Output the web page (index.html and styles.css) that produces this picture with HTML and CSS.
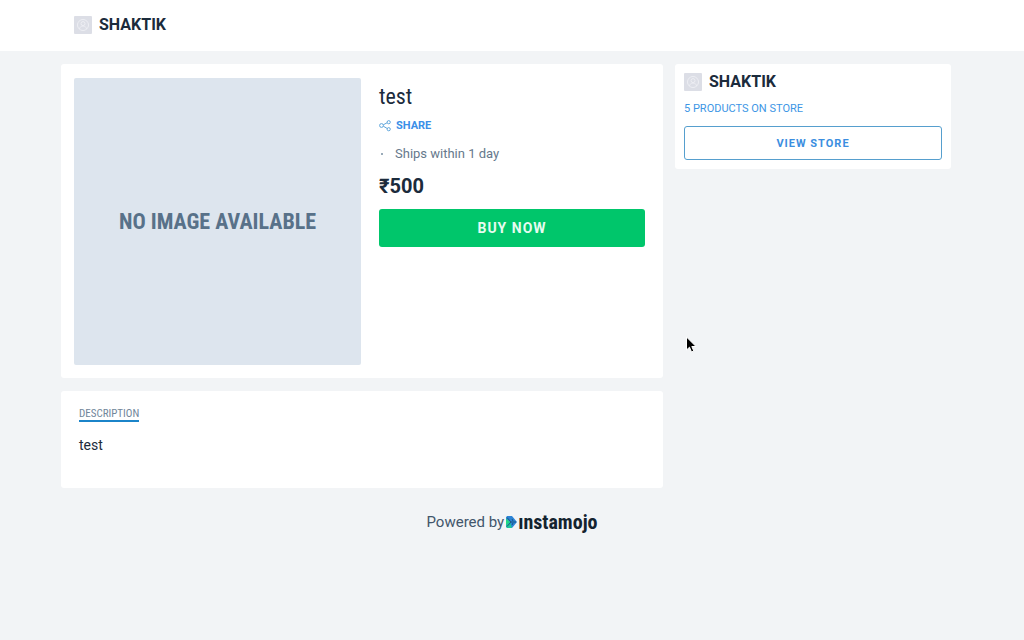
FILE: index.html
```html
<!DOCTYPE html>
<html lang="en">
<head>
<meta charset="utf-8">
<meta name="viewport" content="width=device-width, initial-scale=1">
<title>test - SHAKTIK</title>
<link rel="stylesheet" href="styles.css">
</head>
<body>
<svg class="sprite" aria-hidden="true">
  <symbol id="store" viewBox="0 0 18 18">
    <rect width="18" height="18" rx="1" fill="#dcdee6"/>
    <g fill="none" stroke="#eeeff4" stroke-width="1">
      <circle cx="9" cy="9" r="5.5"/>
      <circle cx="9" cy="7.6" r="2"/>
      <path d="M5.500 13c.3-2 1.600-3 3.500-3s3.200 1 3.500 3"/>
    </g>
  </symbol>
</svg>
<header class="topbar">
  <a class="brand" href="#"><svg class="brand-icon" aria-hidden="true"><use href="#store"/></svg>SHAKTIK</a>
</header>
<main class="page">
  <div class="primary">
    <section class="card product">
      <div class="placeholder">NO IMAGE AVAILABLE</div>
      <div class="details">
        <h1 class="title">test</h1>
        <a class="share" href="#">
          <svg class="share-icon" viewBox="0 0 12 12" aria-hidden="true">
            <path d="M4.300 4.800 8 2.800M4.300 6.200l3.800 2.200"/>
            <circle cx="2.500" cy="5.500" r="1.900"/>
            <circle cx="9.700" cy="2.200" r="1.600"/>
            <circle cx="9.700" cy="9.200" r="1.600"/>
          </svg>SHARE</a>
        <ul class="facts"><li>Ships within 1 day</li></ul>
        <p class="price">₹500</p>
        <button class="buy" type="button">BUY NOW</button>
      </div>
    </section>
    <section class="card description">
      <h2 class="tab">DESCRIPTION</h2>
      <p class="copy">test</p>
    </section>
  </div>
  <aside class="card store">
    <a class="brand" href="#"><svg class="brand-icon" aria-hidden="true"><use href="#store"/></svg>SHAKTIK</a>
    <a class="count" href="#">5 PRODUCTS ON STORE</a>
    <button class="view" type="button">VIEW STORE</button>
  </aside>
</main>
<footer class="footer">
  <span>Powered by</span>
  <a class="logo" href="#">
    <svg class="logo-mark" viewBox="0 0 11 12" aria-hidden="true">
      <path d="M1 0h5l5 6-5 6H1L0 10.500v-9z" fill="#2b83d6"/>
      <path d="M0 2.500 4 6 0 9.500z" fill="#20d884"/>
      <path d="M4 6 6 12H1L0 10z" fill="#20c79a"/>
      <path d="M1 1.500 5 6 1 10.500M5 6h5M6 3l1 2M6 9l1-2" fill="none" stroke="#164b6c" stroke-width=".8"/>
    </svg><span>ınstamojo</span></a>
</footer>
<svg class="pointer" viewBox="0 0 12 18" aria-hidden="true">
  <path d="M1.500 1v13l3-2.800 2 4.800 2.300-1-2-4.500H11z" fill="#000" stroke="#fff" stroke-width="1"/>
</svg>
</body>
</html>
```
FILE: styles.css
```css
* { box-sizing: border-box; }

body {
  margin: 0;
  background: #f2f4f6;
  color: #1b2b3c;
  font-family: Roboto, "Liberation Sans", sans-serif;
}

h1, h2, p, ul { margin: 0; padding: 0; }
a { text-decoration: none; }
.sprite { display: none; }

.topbar {
  padding: 14px 74px 15px;
  background: #fff;
}

.brand {
  display: flex;
  align-items: center;
  gap: 7px;
  color: #1b2b3c;
  font-size: 16px;
  font-weight: 700;
  line-height: 22px;
}

.brand-icon { width: 18px; height: 18px; }

.page {
  display: grid;
  grid-template-columns: minmax(0, 1fr) 276px;
  gap: 12px;
  align-items: start;
  max-width: 1200px;
  margin: 0 auto;
  padding: 13px 73px 0 61px;
}

.primary { display: grid; gap: 13px; }

.card {
  background: #fff;
  border-radius: 3px;
}

.product {
  display: grid;
  grid-template-columns: 287px minmax(0, 1fr);
  gap: 18px;
  padding: 14px 18px 13px 13px;
}

.placeholder {
  display: grid;
  place-items: center;
  aspect-ratio: 1;
  border-radius: 2px;
  background: #dde5ee;
  color: #587189;
  font-family: "Roboto Condensed", "Liberation Sans Narrow", sans-serif;
  font-size: 22px;
  font-weight: 700;
}

.title {
  margin-top: 5px;
  font-family: "Roboto Condensed", "Liberation Sans Narrow", sans-serif;
  font-size: 22px;
  font-weight: 400;
  line-height: 28px;
}

.share {
  display: flex;
  align-items: center;
  gap: 5px;
  margin-top: 7px;
  color: #3b8fe8;
  font-size: 11px;
  font-weight: 700;
  line-height: 16px;
}

.share-icon {
  width: 12px;
  height: 12px;
  fill: none;
  stroke: #5fa6dc;
  stroke-width: 1;
}

.facts {
  margin-top: 10px;
  color: #66798c;
  font-size: 13px;
  line-height: 20px;
  list-style: none;
}

.facts li {
  display: flex;
  align-items: center;
  gap: 12px;
}

.facts li::before {
  width: 2px;
  height: 2px;
  margin-left: 2px;
  background: #9aabb9;
  content: "";
}

.price {
  margin-top: 9px;
  font-size: 20px;
  font-weight: 700;
  line-height: 26px;
}

.buy, .view {
  display: block;
  width: 100%;
  border-radius: 3px;
  font-family: inherit;
  font-weight: 700;
  letter-spacing: 1px;
  cursor: pointer;
}

.buy {
  height: 38px;
  margin-top: 10px;
  border: 0;
  background: #00c66b;
  color: #e6fbf0;
  font-size: 14px;
}

.description { padding: 17px 18px 32px; }

.tab {
  width: max-content;
  border-bottom: 2px solid #1b84c9;
  color: #71869a;
  font-family: "Roboto Condensed", "Liberation Sans Narrow", sans-serif;
  font-size: 11px;
  font-weight: 400;
  line-height: 12px;
}

.copy {
  margin-top: 12px;
  font-size: 14px;
  line-height: 22px;
}

.store { padding: 7px 9px 9px; }

.count {
  display: block;
  margin-top: 8px;
  color: #3d96e5;
  font-size: 11px;
  line-height: 16px;
}

.view {
  height: 34px;
  margin-top: 9px;
  border: 1px solid #569fce;
  background: #fff;
  color: #3b8ee0;
  font-size: 11px;
}

.footer {
  display: flex;
  justify-content: center;
  align-items: center;
  gap: 2px;
  margin-top: 23px;
  color: #42566b;
  font-size: 15px;
  line-height: 22px;
}

.logo {
  display: flex;
  align-items: center;
  gap: 1px;
  color: #14232f;
  font-family: "Roboto Condensed", "Liberation Sans Narrow", sans-serif;
  font-size: 20px;
  font-weight: 700;
}

.logo-mark { width: 11px; height: 12px; }

.pointer {
  position: absolute;
  top: 336px;
  left: 685px;
  width: 12px;
  height: 18px;
  pointer-events: none;
}
```
